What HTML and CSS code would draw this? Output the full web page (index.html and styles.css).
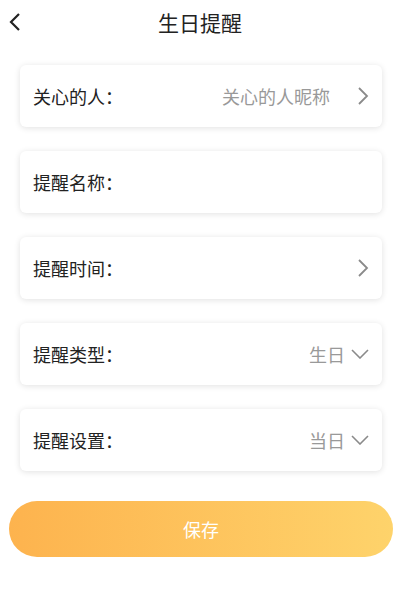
FILE: index.html
```html
<!DOCTYPE html>
<html>
<head>
    <meta charset="UTF-8">
    <title>生日提醒</title>
    <link rel="stylesheet" href="styles.css">
</head>
<body>
<!--顶部导航-->
<div class="navBar">
    <div class="backBtn">
        <svg width="12" height="18" viewBox="0 0 12 18"><path d="M10 1 L2 9 L10 17" fill="none" stroke="#222" stroke-width="2.2"/></svg>
    </div>
    <div class="navTitle">生日提醒</div>
</div>
<!--表单-->
<div class="formList">
    <div class="formItem">
        <span class="label">关心的人：</span>
        <span class="value">关心的人昵称</span>
        <svg class="arrowRight" width="12" height="18" viewBox="0 0 12 18"><path d="M2 1 L10 9 L2 17" fill="none" stroke="#8a8a8a" stroke-width="1.8"/></svg>
    </div>
    <div class="formItem">
        <span class="label">提醒名称：</span>
    </div>
    <div class="formItem">
        <span class="label">提醒时间：</span>
        <span class="value"></span>
        <svg class="arrowRight" width="12" height="18" viewBox="0 0 12 18"><path d="M2 1 L10 9 L2 17" fill="none" stroke="#8a8a8a" stroke-width="1.8"/></svg>
    </div>
    <div class="formItem">
        <span class="label">提醒类型：</span>
        <span class="value">生日</span>
        <svg class="arrowDown" width="18" height="10" viewBox="0 0 18 10"><path d="M1 1 L9 9 L17 1" fill="none" stroke="#8a8a8a" stroke-width="1.6"/></svg>
    </div>
    <div class="formItem">
        <span class="label">提醒设置：</span>
        <span class="value">当日</span>
        <svg class="arrowDown" width="18" height="10" viewBox="0 0 18 10"><path d="M1 1 L9 9 L17 1" fill="none" stroke="#8a8a8a" stroke-width="1.6"/></svg>
    </div>
</div>
<!--保存按钮-->
<div class="saveBtn">保存</div>
</body>
</html>
```

FILE: styles.css
```css
* {
    margin: 0;
    padding: 0;
    box-sizing: border-box;
}
body {
    width: 400px;
    background-color: #fff;
    font-family: "Noto Sans CJK SC", "Noto Sans", sans-serif;
    color: #222;
}
.navBar {
    height: 44px;
    position: relative;
    display: flex;
    justify-content: center;
    align-items: center;
}
.backBtn {
    position: absolute;
    left: 9px;
    top: 12px;
    width: 14px;
    height: 20px;
}
.navTitle {
    font-size: 21px;
    color: #222;
}
.formList {
    padding: 21px 18px 0 20px;
    display: flex;
    flex-direction: column;
    gap: 24px;
}
.formItem {
    height: 62px;
    background-color: #fff;
    border-radius: 6px;
    box-shadow: 0 1px 6px rgba(0, 0, 0, 0.12);
    display: flex;
    align-items: center;
    padding: 0 13px 0 13px;
}
.label {
    font-size: 18px;
    color: #222;
}
.value {
    flex: 1;
    text-align: right;
    font-size: 18px;
    color: #999;
}
.arrowRight {
    margin-left: 27px;
}
.arrowDown {
    margin-left: 6px;
}
.saveBtn {
    margin: 30px 7px 0 9px;
    height: 56px;
    border-radius: 28px;
    background: linear-gradient(to right, #fdb34e, #fed36b);
    color: #fff;
    font-size: 18px;
    display: flex;
    justify-content: center;
    align-items: center;
}
```
